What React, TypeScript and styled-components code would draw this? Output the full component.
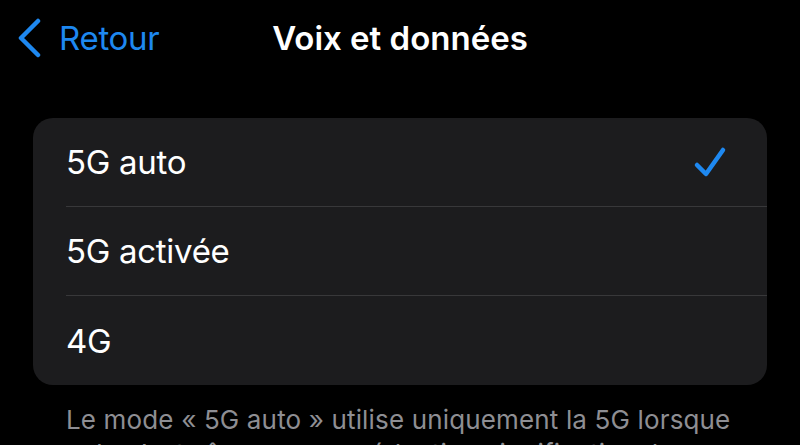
import React from "react";
import styled, { createGlobalStyle } from "styled-components";

const Global = createGlobalStyle`
  html, body { margin: 0; padding: 0; background: #000; }
  body { font-family: Inter, "Noto Sans", sans-serif; -webkit-font-smoothing: antialiased; }
`;

const Screen = styled.div`
  width: 800px;
  height: 445px;
  overflow: hidden;
  background: #000;
  display: flex;
  flex-direction: column;
`;

const NavBar = styled.header`
  position: relative;
  flex-shrink: 0;
  height: 76px;
  display: flex;
  align-items: center;
  justify-content: center;
`;

const BackButton = styled.div`
  position: absolute;
  left: 17px;
  top: 0;
  height: 76px;
  display: flex;
  align-items: center;
  gap: 16px;
  color: #1e88f0;
  font-size: 33px;
  font-weight: 400;
  letter-spacing: -0.3px;
`;

const Title = styled.h1`
  margin: 0;
  color: #fff;
  font-size: 33px;
  font-weight: 600;
  letter-spacing: 0;
`;

const Content = styled.main`
  flex-shrink: 0;
  padding: 42px 33px 0;
  display: flex;
  flex-direction: column;
`;

const Card = styled.section`
  background: #1c1c1e;
  border-radius: 20px;
  overflow: hidden;
  display: flex;
  flex-direction: column;
`;

const Row = styled.div<{ $last?: boolean }>`
  height: 89px;
  margin-left: 33px;
  padding-right: 40px;
  display: flex;
  align-items: center;
  justify-content: space-between;
  box-sizing: border-box;
  border-bottom: ${(p) => (p.$last ? "none" : "1px solid #38383a")};
  color: #fff;
  font-size: 33px;
  letter-spacing: -0.3px;
`;

const Footer = styled.p`
  margin: 18px 30px 0 33px;
  color: #8e8e93;
  font-size: 26px;
  line-height: 34px;
  letter-spacing: 0.15px;
`;

const Chevron = () => (
  <svg width="26" height="40" viewBox="0 0 26 40">
    <path d="M21 3 L4 20 L21 37" fill="none" stroke="#1e88f0" strokeWidth="4.5" strokeLinecap="round" strokeLinejoin="round" />
  </svg>
);

const Check = () => (
  <svg width="34" height="34" viewBox="0 0 34 34">
    <path d="M4 20 L13 29 L30 5" fill="none" stroke="#1e88f0" strokeWidth="4.5" strokeLinecap="round" strokeLinejoin="round" />
  </svg>
);

const options = ["5G auto", "5G activée", "4G"];

export default function App() {
  return (
    <>
      <Global />
      <Screen>
        <NavBar>
          <BackButton>
            <Chevron />
            <span>Retour</span>
          </BackButton>
          <Title>Voix et données</Title>
        </NavBar>
        <Content>
          <Card>
            {options.map((o, i) => (
              <Row key={o} $last={i === options.length - 1}>
                <span>{o}</span>
                {i === 0 && <Check />}
              </Row>
            ))}
          </Card>
          <Footer>
            Le mode « 5G auto » utilise uniquement la 5G lorsque cela n’entraîne pas une réduction significative de l’autonomie de la batterie.
          </Footer>
        </Content>
      </Screen>
    </>
  );
}
